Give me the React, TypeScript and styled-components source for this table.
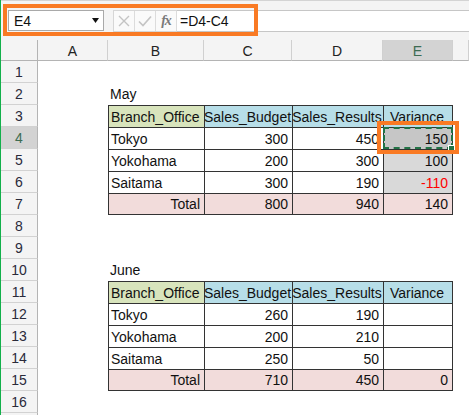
import React from "react";
import styled, { createGlobalStyle, css } from "styled-components";

const GlobalStyle = createGlobalStyle`
  html, body { margin: 0; padding: 0; background: #fff; }
  body { font-family: "Liberation Sans", Arial, sans-serif; }
  #root { width: 469px; height: 415px; overflow: hidden; }
`;

const ORANGE = "#f97a24";
const XL_GREEN = "#217346";

const Page = styled.div`
  width: 469px;
  height: 415px;
  overflow: hidden;
  box-sizing: border-box;
  border-left: 1px solid #13b04b;
  display: flex;
  flex-direction: column;
  background: #fff;
`;

const Toolbar = styled.div`
  position: relative;
  flex: 0 0 40px;
  box-sizing: border-box;
  background: #f4f4f4;
  border-top: 1px solid #d4d4d4;
  display: flex;
  align-items: flex-start;
  padding: 9px 0 0 7px;
`;

const NameBox = styled.div`
  width: 96px;
  height: 21px;
  box-sizing: border-box;
  border: 1px solid #a9a9a9;
  background: #fff;
  display: flex;
  align-items: center;
  justify-content: space-between;
  padding: 0 4px 0 5px;
  font-size: 14px;
  color: #111;
`;

const ButtonGroup = styled.div`
  margin-left: 9px;
  display: flex;
  height: 22px;
  box-sizing: border-box;
  border: 1px solid #d6d6d6;
  border-right: none;
  background: #fafafa;
`;

const BarButton = styled.div`
  width: 21px;
  height: 20px;
  box-sizing: border-box;
  border-right: 1px solid #dcdcdc;
  display: flex;
  align-items: center;
  justify-content: center;
  color: #c4c4c4;
`;

const FxLabel = styled.span`
  font-family: "Liberation Serif", "DejaVu Serif", serif;
  font-style: italic;
  font-weight: bold;
  font-size: 14px;
  color: #7a7a7a;
  letter-spacing: -1px;
`;

const FormulaInput = styled.div`
  flex: 1;
  height: 22px;
  box-sizing: border-box;
  background: #fff;
  border-top: 1px solid #c6c6c6;
  border-bottom: 1px solid #c6c6c6;
  font-size: 14px;
  line-height: 20px;
  padding-left: 3px;
  color: #111;
`;

const Highlight = styled.div<{ $top: number; $left: number; $w: number; $h: number }>`
  position: absolute;
  top: ${(p) => p.$top}px;
  left: ${(p) => p.$left}px;
  width: ${(p) => p.$w}px;
  height: ${(p) => p.$h}px;
  box-sizing: border-box;
  border: 4px solid ${ORANGE};
  pointer-events: none;
  z-index: 5;
`;

const Sheet = styled.div`
  display: grid;
  grid-template-columns: 37px 70px 96px 88px 91px 70px 1fr;
  grid-template-rows: 21px repeat(17, 22px);
  font-size: 14px;
  color: #111;
`;

const Corner = styled.div`
  background: #f4f4f4;
  border-right: 1px solid #b4b4b4;
  border-bottom: 1px solid #b4b4b4;
`;

const ColHead = styled.div<{ $active?: boolean }>`
  background: ${(p) => (p.$active ? "#d3d3d3" : "#f4f4f4")};
  border-right: 1px solid #d0d0d0;
  border-bottom: 1px solid #b4b4b4;
  display: flex;
  align-items: center;
  justify-content: center;
  color: ${(p) => (p.$active ? "#3d6b52" : "#222")};
  padding-top: 1px;
  box-sizing: border-box;
`;

const RowHead = styled.div<{ $active?: boolean }>`
  background: ${(p) => (p.$active ? "#d3d3d3" : "#f4f4f4")};
  border-right: 1px solid #b4b4b4;
  border-bottom: 1px solid #d2d2d2;
  display: flex;
  align-items: center;
  justify-content: center;
  color: ${(p) => (p.$active ? "#3d6b52" : "#2a2a3a")};
  box-sizing: border-box;
`;

type Align = "left" | "right" | "center";

const Cell = styled.div<{
  $align?: Align;
  $fill?: string;
  $color?: string;
  $table?: boolean;
  $lastCol?: boolean;
  $lastRow?: boolean;
  $anchor?: boolean;
}>`
  position: ${(p) => (p.$anchor ? "relative" : "static")};
  box-sizing: border-box;
  display: flex;
  align-items: center;
  justify-content: ${(p) =>
    p.$align === "right" ? "flex-end" : p.$align === "center" ? "center" : "flex-start"};
  padding: 0 4px 0 2px;
  white-space: nowrap;
  background: ${(p) => p.$fill || "transparent"};
  color: ${(p) => p.$color || "#111"};
  ${(p) =>
    p.$table &&
    css`
      border-top: 1px solid #333;
      border-left: 1px solid #333;
    `}
  ${(p) => p.$lastCol && css`border-right: 1px solid #333;`}
  ${(p) => p.$lastRow && css`border-bottom: 1px solid #333;`}
`;

const Ants = styled.div`
  position: absolute;
  top: -1px;
  left: -1px;
  right: -1px;
  bottom: 0;
  border: 2px dashed ${XL_GREEN};
  pointer-events: none;
  z-index: 3;
`;

const Handle = styled.div`
  position: absolute;
  right: -3px;
  bottom: -3px;
  width: 5px;
  height: 5px;
  background: ${XL_GREEN};
  border: 1px solid #fff;
  z-index: 4;
`;

type Spec = {
  text?: string;
  align?: Align;
  fill?: string;
  color?: string;
  table?: boolean;
  lastCol?: boolean;
  lastRow?: boolean;
  active?: boolean;
};

const GREEN_FILL = "#d8e4bc";
const BLUE_FILL = "#b7dee8";
const PINK_FILL = "#f2dcdb";

type Row = [string, number, number, string];

function tableRows(
  title: string,
  data: Row[],
  total: [number, number, string],
  varianceFills: (string | undefined)[],
  varianceColors: (string | undefined)[]
): Spec[][] {
  const rows: Spec[][] = [];
  rows.push([{}, { text: title }, {}, {}, {}, {}]);
  rows.push([
    {},
    { text: "Branch_Office", fill: GREEN_FILL, table: true },
    { text: "Sales_Budget", fill: BLUE_FILL, table: true, align: "center" },
    { text: "Sales_Results", fill: BLUE_FILL, table: true, align: "center" },
    { text: "Variance", fill: BLUE_FILL, table: true, align: "center", lastCol: true },
    {},
  ]);
  data.forEach((d, i) => {
    rows.push([
      {},
      { text: d[0], table: true },
      { text: String(d[1]), table: true, align: "right" },
      { text: String(d[2]), table: true, align: "right" },
      {
        text: d[3],
        table: true,
        align: "right",
        lastCol: true,
        fill: varianceFills[i],
        color: varianceColors[i],
        active: title === "May" && i === 0,
      },
      {},
    ]);
  });
  rows.push([
    {},
    { text: "Total", table: true, align: "right", fill: PINK_FILL, lastRow: true },
    { text: String(total[0]), table: true, align: "right", fill: PINK_FILL, lastRow: true },
    { text: String(total[1]), table: true, align: "right", fill: PINK_FILL, lastRow: true },
    { text: total[2], table: true, align: "right", fill: PINK_FILL, lastRow: true, lastCol: true },
    {},
  ]);
  return rows;
}

const empty = (): Spec[] => [{}, {}, {}, {}, {}, {}];

const sheetRows: Spec[][] = [
  empty(),
  ...tableRows(
    "May",
    [
      ["Tokyo", 300, 450, "150"],
      ["Yokohama", 200, 300, "100"],
      ["Saitama", 300, 190, "-110"],
    ],
    [800, 940, "140"],
    ["#c6c6c6", "#d9d9d9", "#d9d9d9"],
    [undefined, undefined, "#ff0000"]
  ),
  empty(),
  empty(),
  ...tableRows(
    "June",
    [
      ["Tokyo", 260, 190, ""],
      ["Yokohama", 200, 210, ""],
      ["Saitama", 250, 50, ""],
    ],
    [710, 450, "0"],
    [undefined, undefined, undefined],
    [undefined, undefined, undefined]
  ),
  empty(),
  empty(),
];

const columns = ["A", "B", "C", "D", "E", ""];
const VISIBLE_ROW_LABELS = 16;

const CrossIcon = () => (
  <svg width="12" height="12" viewBox="0 0 12 12">
    <path d="M1 1 L11 11 M11 1 L1 11" stroke="currentColor" strokeWidth="1.4" fill="none" />
  </svg>
);

const CheckIcon = () => (
  <svg width="14" height="12" viewBox="0 0 14 12">
    <path d="M1 6.5 L5 10.5 L13 1.5" stroke="currentColor" strokeWidth="1.7" fill="none" />
  </svg>
);

const DropArrow = () => (
  <svg width="7" height="5" viewBox="0 0 7 5">
    <path d="M0 0 H7 L3.5 5 Z" fill="#111" />
  </svg>
);

export default function App() {
  return (
    <>
      <GlobalStyle />
      <Page>
        <Toolbar>
          <NameBox>
            <span>E4</span>
            <DropArrow />
          </NameBox>
          <ButtonGroup>
            <BarButton>
              <CrossIcon />
            </BarButton>
            <BarButton>
              <CheckIcon />
            </BarButton>
            <BarButton>
              <FxLabel>fx</FxLabel>
            </BarButton>
          </ButtonGroup>
          <FormulaInput>=D4-C4</FormulaInput>
          <Highlight $top={3} $left={2} $w={255} $h={32} />
        </Toolbar>
        <Sheet>
          <Corner />
          {columns.map((c, i) => (
            <ColHead key={i} $active={c === "E"}>
              {c}
            </ColHead>
          ))}
          {sheetRows.map((row, r) => (
            <React.Fragment key={r}>
              <RowHead $active={r === 3}>{r < VISIBLE_ROW_LABELS ? r + 1 : ""}</RowHead>
              {row.map((s, c) => (
                <Cell
                  key={c}
                  $align={s.align}
                  $fill={s.fill}
                  $color={s.color}
                  $table={s.table}
                  $lastCol={s.lastCol}
                  $lastRow={s.lastRow}
                  $anchor={s.active}
                >
                  {s.text}
                  {s.active && (
                    <>
                      <Ants />
                      <Handle />
                      <Highlight $top={-7} $left={-7} $w={82} $h={33} />
                    </>
                  )}
                </Cell>
              ))}
            </React.Fragment>
          ))}
        </Sheet>
      </Page>
    </>
  );
}
